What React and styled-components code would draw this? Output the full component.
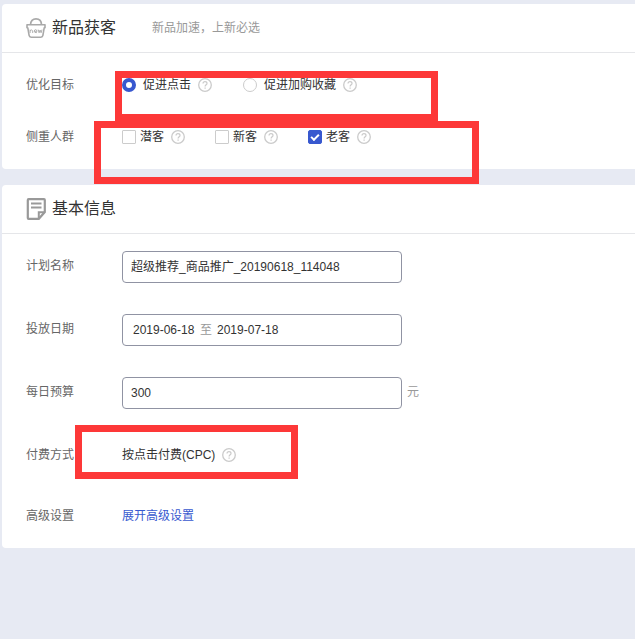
import React, { useState } from "react";
import styled, { createGlobalStyle } from "styled-components";

const people = [
  { id: "potential", name: "潜客" },
  { id: "fresh", name: "新客" },
  { id: "regular", name: "老客" },
];

const goals = [
  { id: "click", name: "促进点击" },
  { id: "collect", name: "促进加购收藏" },
];

function BasketIcon() {
  return (
    <svg width="20" height="20" viewBox="0 0 20 20" fill="none" stroke="#a9a9a9" aria-hidden="true">
      <path d="M4.5 7C4.5 2.8 6.8 0.9 10 0.9S15.5 2.8 15.5 7" strokeWidth="1.7" />
      <path d="M1 6.8h18v3h-0.8l-1.3 7.6q-0.3 1.8-2 1.8H5.1q-1.7 0-2-1.8L1.8 9.8H1z" strokeWidth="1.6" strokeLinejoin="round" />
      <path d="M4.1 15v-3.4M4.1 12.8q1.9-1.8 2.6 0v2.2M8.3 13.3h2.8q-0.3-1.7-1.5-1.7-1.3 0-1.3 1.7 0 1.7 2.6 1.3M12.2 11.6l0.9 3.2 1-2.8 1 2.8 0.9-3.2" strokeWidth="0.9" />
    </svg>
  );
}

function NoteIcon() {
  return (
    <svg width="20" height="22" viewBox="0 0 20 22" fill="none" stroke="#999" aria-hidden="true">
      <path d="M2.6 1.2h15.4q0.8 0 0.8 0.8V14l-6 6.8H2.6q-0.8 0-0.8-0.8V2q0-0.8 0.8-0.8z" strokeWidth="2.2" />
      <path d="M12.8 20.5v-6.3h6" strokeWidth="2" />
      <path d="M5 5.5h10.5M5 9.5h10.5" strokeWidth="2" />
    </svg>
  );
}

function Help() {
  return (
    <HelpButton type="button" aria-label="帮助">
      <svg width="14" height="14" viewBox="0 0 14 14" fill="none" stroke="#cbcbcb">
        <circle cx="7" cy="7" r="6.3" strokeWidth="1.3" />
        <path d="M5 5.6C5 4.3 5.8 3.6 7 3.6s2 0.7 2 1.8C9 6.7 7.1 6.8 7.1 8.4" strokeWidth="1.2" />
        <path d="M7.1 9.5v1.2" strokeWidth="1.3" />
      </svg>
    </HelpButton>
  );
}

export default function App() {
  const [goal, setGoal] = useState("click");
  const [checked, setChecked] = useState(["regular"]);
  const [name, setName] = useState("超级推荐_商品推广_20190618_114048");
  const [start, setStart] = useState("2019-06-18");
  const [end, setEnd] = useState("2019-07-18");
  const [budget, setBudget] = useState("300");

  const toggle = (id) =>
    setChecked(checked.includes(id) ? checked.filter((c) => c !== id) : [...checked, id]);

  return (
    <Page>
      <GlobalStyle />
      <Card>
        <Header>
          <BasketIcon />
          <Title>新品获客</Title>
          <Subtitle>新品加速，上新必选</Subtitle>
        </Header>
        <Body $gap={22}>
          <Row role="radiogroup" aria-labelledby="goal">
            <Label as="span" id="goal">优化目标</Label>
            <Options $gap={31}>
              {goals.map((g) => (
                <Option key={g.id}>
                  <Choice $gap={7}>
                    <Radio name="goal" checked={goal === g.id} onChange={() => setGoal(g.id)} />
                    {g.name}
                  </Choice>
                  <Help />
                </Option>
              ))}
            </Options>
            <Mark $left={89} $top={1} $width={323} $height={50} />
          </Row>
          <Row role="group" aria-labelledby="people">
            <Label as="span" id="people">侧重人群</Label>
            <Options $gap={30}>
              {people.map((p) => (
                <Option key={p.id}>
                  <Choice $gap={4}>
                    <Checkbox checked={checked.includes(p.id)} onChange={() => toggle(p.id)} />
                    {p.name}
                  </Choice>
                  <Help />
                </Option>
              ))}
            </Options>
            <Mark $left={68} $top={-1} $width={385} $height={63} />
          </Row>
        </Body>
      </Card>

      <Card>
        <Header>
          <NoteIcon />
          <Title>基本信息</Title>
        </Header>
        <Body $gap={31}>
          <Row>
            <Label htmlFor="name">计划名称</Label>
            <Field>
              <TextInput id="name" value={name} onChange={(e) => setName(e.target.value)} />
            </Field>
          </Row>
          <Row>
            <Label htmlFor="start">投放日期</Label>
            <DateField>
              <TextInput id="start" value={start} onChange={(e) => setStart(e.target.value)} />
              <Muted>至</Muted>
              <TextInput aria-label="结束日期" value={end} onChange={(e) => setEnd(e.target.value)} />
            </DateField>
          </Row>
          <Row>
            <Label htmlFor="budget">每日预算</Label>
            <Field>
              <TextInput id="budget" value={budget} onChange={(e) => setBudget(e.target.value)} />
            </Field>
            <Unit>元</Unit>
          </Row>
          <Row>
            <Label as="span">付费方式</Label>
            <Option>
              <span>按点击付费(CPC)</span>
              <Help />
            </Option>
            <Mark $left={49} $top={-15} $width={223} $height={54} />
          </Row>
          <Row>
            <Label as="span">高级设置</Label>
            <Link href="#advanced">展开高级设置</Link>
          </Row>
        </Body>
      </Card>
    </Page>
  );
}

const GlobalStyle = createGlobalStyle`
  * {
    box-sizing: border-box;
  }
  body {
    margin: 0;
    background: #e7eaf3;
    color: #333;
    font-family: "Liberation Sans", "Noto Sans CJK SC", sans-serif;
    font-size: 12px;
    line-height: 30px;
  }
  input, button {
    font: inherit;
    color: inherit;
  }
`;

const Page = styled.main`
  display: flex;
  flex-direction: column;
  gap: 16px;
  padding: 4px 0 16px 2px;
`;

const Card = styled.section`
  background: #fff;
  border-radius: 4px 0 0 4px;
`;

const Header = styled.header`
  display: flex;
  align-items: center;
  height: 49px;
  padding: 0 24px;
  border-bottom: 1px solid #e5e6e9;
  svg {
    flex: none;
    margin-right: 6px;
  }
`;

const Title = styled.h2`
  margin: 0;
  font-size: 16px;
  font-weight: 400;
`;

const Subtitle = styled.span`
  margin-left: 36px;
  color: #999;
`;

const Body = styled.div`
  display: flex;
  flex-direction: column;
  gap: ${(p) => p.$gap}px;
  padding: 17px 24px;
`;

const Row = styled.div`
  position: relative;
  display: flex;
  align-items: flex-start;
`;

const Label = styled.label`
  flex: none;
  width: 96px;
  color: #666;
`;

const Options = styled.div`
  display: flex;
  gap: ${(p) => p.$gap}px;
`;

const Option = styled.div`
  display: flex;
  align-items: center;
  gap: 7px;
`;

const Choice = styled.label`
  display: flex;
  align-items: center;
  gap: ${(p) => p.$gap}px;
  cursor: pointer;
`;

const Radio = styled.input.attrs({ type: "radio" })`
  appearance: none;
  width: 14px;
  height: 14px;
  margin: 0;
  border: 1px solid #ccc;
  border-radius: 50%;
  background: #fff;
  &:checked {
    border: 4px solid #3858cf;
  }
`;

const Checkbox = styled.input.attrs({ type: "checkbox" })`
  appearance: none;
  display: grid;
  place-items: center;
  width: 14px;
  height: 14px;
  margin: 0;
  border: 1px solid #ccc;
  border-radius: 1px;
  background: #fff;
  &:checked {
    border-color: #3858cf;
    border-radius: 2px;
    background: #3858cf;
  }
  &:checked::after {
    content: "";
    box-sizing: border-box;
    width: 8px;
    height: 5px;
    margin-bottom: 2px;
    border: solid #fff;
    border-width: 0 0 2px 2px;
    transform: rotate(-45deg);
  }
`;

const HelpButton = styled.button`
  display: flex;
  padding: 0;
  border: 0;
  background: none;
  cursor: pointer;
`;

const Field = styled.div`
  display: flex;
  align-items: center;
  width: 280px;
  height: 32px;
  padding: 0 8px;
  border: 1px solid #9093a3;
  border-radius: 4px;
`;

const TextInput = styled.input`
  flex: 1;
  min-width: 0;
  padding: 0;
  border: 0;
  outline: 0;
  background: none;
`;

const DateField = styled(Field)`
  gap: 5px;
  padding: 0 10px;
  ${TextInput} {
    flex: none;
    width: 62px;
  }
`;

const Muted = styled.span`
  color: #999;
`;

const Unit = styled(Muted)`
  margin-left: 5px;
`;

const Link = styled.a`
  color: #3858cf;
  text-decoration: none;
`;

const Mark = styled.div`
  position: absolute;
  left: ${(p) => p.$left}px;
  top: ${(p) => p.$top}px;
  width: ${(p) => p.$width}px;
  height: ${(p) => p.$height}px;
  border: 7px solid #fd3838;
  pointer-events: none;
`;
